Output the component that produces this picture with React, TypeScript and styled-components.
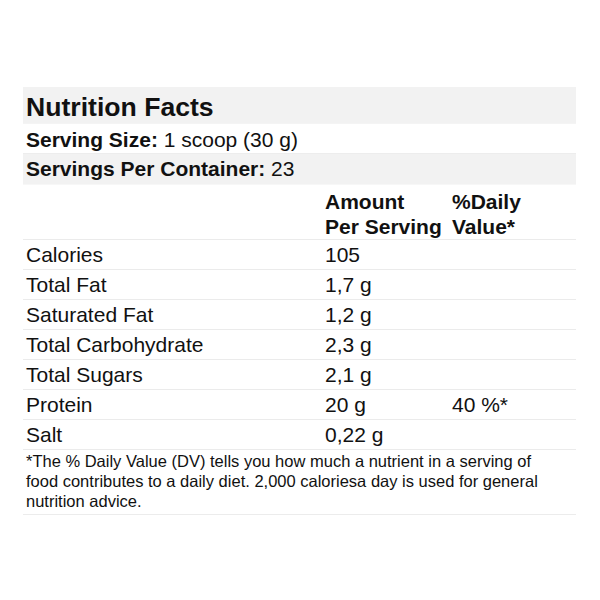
import React from "react";
import styled, { createGlobalStyle } from "styled-components";

const GlobalStyle = createGlobalStyle`
  html, body { margin: 0; padding: 0; background: #ffffff; }
  body { font-family: "Liberation Sans", Arial, sans-serif; color: #111111; }
`;

const Page = styled.div`
  width: 600px;
  height: 600px;
  padding: 87px 0 0 23px;
  box-sizing: border-box;
`;

const Table = styled.div`
  width: 553px;
  display: flex;
  flex-direction: column;
  border-bottom: 1px solid #ececec;
`;

const TitleRow = styled.div`
  height: 36px;
  box-sizing: border-box;
  background: #f2f2f2;
  padding: 5px 3px 0;
  font-size: 26.6px;
  line-height: 30px;
  font-weight: 700;
`;

const InfoRow = styled.div<{ $shaded?: boolean }>`
  height: ${(p) => (p.$shaded ? 31 : 30)}px;
  box-sizing: border-box;
  background: ${(p) => (p.$shaded ? "#f2f2f2" : "#ffffff")};
  border-top: 1px solid ${(p) => (p.$shaded ? "#ededed" : "#f4f4f4")};
  padding: ${(p) => (p.$shaded ? "3px" : "4px")} 3px 0;
  font-size: 21px;
  line-height: 24px;
  white-space: nowrap;
`;

const Strong = styled.b`
  font-weight: 700;
`;

const GridRow = styled.div<{ $header?: boolean }>`
  display: grid;
  grid-template-columns: 299px 127px 1fr;
  border-top: 1px solid ${(p) => (p.$header ? "#f7f7f7" : "#ebebeb")};
  height: ${(p) => (p.$header ? 55 : 30)}px;
  box-sizing: border-box;
  font-size: 21px;
  line-height: 24px;
  font-weight: ${(p) => (p.$header ? 700 : 400)};
`;

const Cell = styled.div`
  padding: 3px 3px 0;
  white-space: nowrap;
`;

const HeaderCell = styled(Cell)`
  padding-top: 4px;
  line-height: 25px;
  white-space: normal;
`;

const Footnote = styled.div`
  border-top: 1px solid #ebebeb;
  padding: 1px 25px 3px 3px;
  font-size: 16.5px;
  line-height: 20px;
`;

const rows: [string, string, string][] = [
  ["Calories", "105", ""],
  ["Total Fat", "1,7 g", ""],
  ["Saturated Fat", "1,2 g", ""],
  ["Total Carbohydrate", "2,3 g", ""],
  ["Total Sugars", "2,1 g", ""],
  ["Protein", "20 g", "40 %*"],
  ["Salt", "0,22 g", ""],
];

export default function App() {
  return (
    <>
      <GlobalStyle />
      <Page>
        <Table>
          <TitleRow>Nutrition Facts</TitleRow>
          <InfoRow>
            <Strong>Serving Size:</Strong> 1 scoop (30 g)
          </InfoRow>
          <InfoRow $shaded>
            <Strong>Servings Per Container:</Strong> 23
          </InfoRow>
          <GridRow $header>
            <HeaderCell />
            <HeaderCell>
              Amount
              <br />
              Per Serving
            </HeaderCell>
            <HeaderCell>
              %Daily
              <br />
              Value*
            </HeaderCell>
          </GridRow>
          {rows.map(([name, amount, dv]) => (
            <GridRow key={name}>
              <Cell>{name}</Cell>
              <Cell>{amount}</Cell>
              <Cell>{dv}</Cell>
            </GridRow>
          ))}
          <Footnote>
            *The % Daily Value (DV) tells you how much a nutrient in a serving of
            food contributes to a daily diet. 2,000 caloriesa day is used for
            general nutrition advice.
          </Footnote>
        </Table>
      </Page>
    </>
  );
}
